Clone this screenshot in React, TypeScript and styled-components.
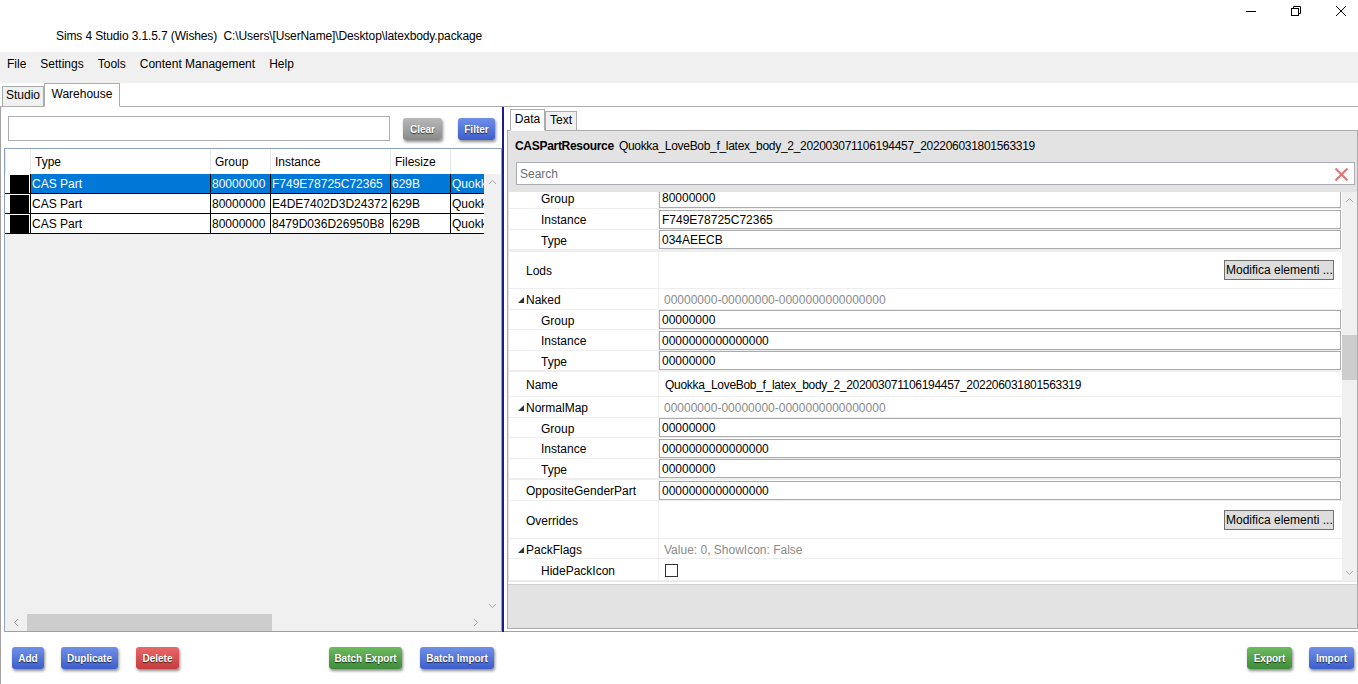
import React from "react";
import styled, { createGlobalStyle } from "styled-components";

const GlobalStyle = createGlobalStyle`
  html, body { margin: 0; padding: 0; background: #ffffff; }
  body { font-family: "Liberation Sans", Arial, sans-serif; font-size: 12px; color: #000; }
  * { box-sizing: border-box; }
`;

type Tone = "blue" | "gray" | "green" | "red";

const tones: Record<Tone, string> = {
  blue: "linear-gradient(#6f90e8, #3d5ecb)",
  gray: "linear-gradient(#b8b8b8, #8a8a8a)",
  green: "linear-gradient(#6dbb5f, #3f8b3a)",
  red: "linear-gradient(#ea6868, #c43c3c)",
};

const Window = styled.div`
  width: 1358px;
  height: 684px;
  overflow: hidden;
  display: flex;
  flex-direction: column;
  background: #fff;
`;

const TitleBar = styled.div`
  height: 52px;
  flex-shrink: 0;
  display: flex;
  justify-content: space-between;
`;

const TitleText = styled.div`
  padding: 29px 0 0 56px;
  white-space: pre;
  line-height: 14px;
  letter-spacing: -0.12px;
`;

const WinControls = styled.div`
  display: flex;
  gap: 35px;
  padding: 6px 12px 0 0;
  align-items: flex-start;
`;

const MenuBar = styled.div`
  height: 31px;
  flex-shrink: 0;
  background: #f0f0f0;
  display: flex;
  align-items: flex-start;
`;

const MenuItem = styled.div`
  padding: 0 7px;
  height: 24px;
  line-height: 24px;
`;

const TabStrip = styled.div<{ $pad: number }>`
  height: 24px;
  flex-shrink: 0;
  display: flex;
  align-items: flex-end;
  padding-left: ${(p) => p.$pad}px;
  border-bottom: 1px solid #acacac;
`;

const Tab = styled.div<{ $active?: boolean; $w: number; $h: number }>`
  width: ${(p) => p.$w}px;
  height: ${(p) => p.$h}px;
  border: 1px solid #acacac;
  border-bottom: ${(p) => (p.$active ? "1px solid #fff" : "none")};
  margin-bottom: ${(p) => (p.$active ? "-1px" : "0")};
  background: ${(p) => (p.$active ? "#fff" : "#f0f0f0")};
  text-align: center;
  line-height: ${(p) => p.$h - 3}px;
  position: relative;
  z-index: ${(p) => (p.$active ? 1 : 0)};
`;

const Body = styled.div`
  flex: 1;
  display: flex;
  flex-direction: column;
  border-left: 1px solid #a0a0a0;
`;

const Split = styled.div`
  height: 525px;
  display: flex;
  flex-shrink: 0;
`;

const LeftPanel = styled.div`
  width: 503px;
  border-right: 2px solid #1c1c8a;
  display: flex;
  flex-direction: column;
`;

const FilterRow = styled.div`
  height: 41px;
  display: flex;
  align-items: flex-start;
  padding: 9px 0 0 7px;
`;

const TextBox = styled.div`
  width: 382px;
  height: 25px;
  border: 1px solid #abadb3;
  background: #fff;
`;

const Btn = styled.button<{ $tone: Tone; $w: number; $ml?: number; $mt?: number }>`
  width: ${(p) => p.$w}px;
  height: 22px;
  flex-shrink: 0;
  margin-left: ${(p) => p.$ml ?? 0}px;
  margin-top: ${(p) => p.$mt ?? 0}px;
  padding: 0;
  border: none;
  border-radius: 3px;
  background: ${(p) => tones[p.$tone]};
  box-shadow: 1px 2px 3px rgba(0, 0, 0, 0.45);
  color: #fff;
  font: bold 10px "Liberation Sans", Arial, sans-serif;
  text-shadow: 0 1px 1px rgba(0, 0, 0, 0.65);
  white-space: nowrap;
`;

const TableBox = styled.div`
  margin-left: 3px;
  width: 498px;
  height: 484px;
  border: 1px solid #8ea3c2;
  background: #f0f0f0;
  display: grid;
  grid-template-columns: 1fr 17px;
  grid-template-rows: 1fr 17px;
`;

const GridArea = styled.div`
  overflow: hidden;
  display: flex;
  flex-direction: column;
`;

const cols = "25px 180px 60px 120px 60px 34px";

const HeaderRow = styled.div`
  display: grid;
  grid-template-columns: ${cols};
  height: 25px;
  padding-top: 1px;
  background: #fff;
`;

const HeaderCell = styled.div`
  border-left: 1px solid #e5e5e5;
  padding-left: 4px;
  line-height: 24px;
  white-space: nowrap;
  overflow: hidden;
`;

const DataRow = styled.div<{ $selected?: boolean }>`
  display: grid;
  grid-template-columns: ${cols};
  height: 20px;
  background: ${(p) => (p.$selected ? "#0078d7" : "#fff")};
  color: ${(p) => (p.$selected ? "#fff" : "#000")};
  border-bottom: 1px solid #000;
`;

const RowHead = styled.div`
  background: #fff;
  padding: 1px 1px 0 5px;
`;

const RowSwatch = styled.div`
  height: 100%;
  background: #000;
`;

const DataCell = styled.div`
  border-left: 1px solid #000;
  padding: 1px 0 0 1px;
  line-height: 18px;
  white-space: nowrap;
  overflow: hidden;
`;

const VScroll = styled.div`
  display: flex;
  flex-direction: column;
`;

const ScrollCorner = styled.div<{ $h: number }>`
  height: ${(p) => p.$h}px;
  background: #fff;
`;

const ArrowBox = styled.div<{ $w?: number; $h?: number }>`
  width: ${(p) => (p.$w ? `${p.$w}px` : "100%")};
  height: ${(p) => (p.$h ? `${p.$h}px` : "100%")};
  flex-shrink: 0;
  display: flex;
  align-items: center;
  justify-content: center;
`;

const Filler = styled.div`
  flex: 1;
`;

const HScroll = styled.div`
  display: flex;
  align-items: stretch;
`;

const HThumb = styled.div`
  width: 245px;
  background: #cdcdcd;
`;

const RightPanel = styled.div`
  flex: 1;
  display: flex;
  flex-direction: column;
  padding-left: 3px;
  border-bottom: 1px solid #a0a0a0;
`;

const RightContent = styled.div`
  flex: 1;
  margin-bottom: 2px;
  border: 1px solid #acacac;
  border-top: none;
  background: #e3e3e3;
  display: flex;
  flex-direction: column;
`;

const ResHeader = styled.div`
  height: 31px;
  padding: 8px 0 0 7px;
  line-height: 14px;
  white-space: nowrap;
  letter-spacing: -0.3px;
  b {
    font-weight: bold;
    margin-right: 5px;
  }
`;

const SearchBox = styled.div`
  height: 23px;
  margin: 0 2px 0 8px;
  background: #fff;
  border: 1px solid #abadb3;
  display: flex;
  align-items: center;
  justify-content: space-between;
  padding: 1px 5px 0 3px;
  color: #6d6d6d;
`;

const PropGrid = styled.div`
  margin: 7px 0 0 1px;
  height: 389px;
  display: flex;
  background: #fff;
`;

const PropRows = styled.div`
  width: 833px;
  overflow: hidden;
`;

const PropRow = styled.div<{ $h: number; $sep: number }>`
  height: ${(p) => p.$h}px;
  display: flex;
  border-bottom: ${(p) => p.$sep}px solid #eeeeee;
`;

const LabelCell = styled.div<{ $level: number; $cut?: boolean }>`
  width: 150px;
  flex-shrink: 0;
  border-right: 1px solid #f0f0f0;
  display: flex;
  align-items: center;
  padding-top: ${(p) => (p.$cut ? 0 : 2)}px;
  padding-bottom: ${(p) => (p.$cut ? 3 : 0)}px;
  padding-left: ${(p) => (p.$level ? 32 : 17)}px;
  position: relative;
  white-space: nowrap;
`;

const Expander = styled.svg`
  position: absolute;
  left: 9px;
  top: 50%;
  margin-top: -2px;
`;

const ValueCell = styled.div<{ $end?: boolean }>`
  flex: 1;
  display: flex;
  align-items: ${(p) => (p.$end ? "flex-end" : "center")};
  overflow: hidden;
`;

const ValueBox = styled.div<{ $cut?: boolean }>`
  width: 682px;
  height: ${(p) => (p.$cut ? 17 : 19)}px;
  border: 1px solid #ababab;
  border-top: ${(p) => (p.$cut ? "none" : "1px solid #ababab")};
  padding: ${(p) => (p.$cut ? 0 : 1)}px 0 0 2px;
  line-height: ${(p) => (p.$cut ? 14 : 16)}px;
  white-space: nowrap;
`;

const ValueText = styled.div<{ $muted?: boolean }>`
  padding: 2px 0 0 ${(p) => (p.$muted ? 5 : 6)}px;
  color: ${(p) => (p.$muted ? "#8a8a8a" : "#000")};
  white-space: nowrap;
  letter-spacing: ${(p) => (p.$muted ? "0" : "-0.3px")};
`;

const EditButton = styled.div`
  margin-left: auto;
  margin-right: 8px;
  width: 110px;
  height: 20px;
  background: #dddddd;
  border: 1px solid #707070;
  line-height: 18px;
  padding-left: 1px;
  white-space: nowrap;
`;

const CheckBox = styled.div`
  margin: 2px 0 0 6px;
  width: 13px;
  height: 13px;
  border: 1px solid #333;
  background: #fff;
`;

const GridScroll = styled.div`
  flex: 1;
  background: #f0f0f0;
  display: flex;
  flex-direction: column;
`;

const VThumbTrack = styled.div`
  flex: 1;
  padding-top: 126px;
`;

const VThumb = styled.div`
  height: 45px;
  background: #cdcdcd;
`;

const GridFoot = styled.div`
  height: 4px;
  background: #fff;
  border-top: 1px solid #e8e8e8;
  border-bottom: 1px solid #d0d0d0;
`;

const BottomBar = styled.div`
  flex: 1;
  display: flex;
  align-items: flex-start;
  padding: 15px 4px 0 11px;
`;

const Spacer = styled.div`
  flex: 1;
`;

const Chevron = ({ dir }: { dir: "up" | "down" | "left" | "right" }) => {
  const rot = { up: 0, right: 90, down: 180, left: 270 }[dir];
  return (
    <svg width="9" height="9" viewBox="0 0 9 9" style={{ transform: `rotate(${rot}deg)` }}>
      <polyline points="1,6 4.5,2.5 8,6" fill="none" stroke="#a6a6a6" strokeWidth="1" />
    </svg>
  );
};

type Prop = {
  label: string;
  level: number;
  h: number;
  sep?: number;
  expander?: boolean;
  kind: "box" | "text" | "muted" | "button" | "check";
  value?: string;
  cut?: boolean;
};

const props: Prop[] = [
  { label: "Group", level: 1, h: 17, kind: "box", value: "80000000", cut: true },
  { label: "Instance", level: 1, h: 21, kind: "box", value: "F749E78725C72365" },
  { label: "Type", level: 1, h: 22, sep: 3, kind: "box", value: "034AEECB" },
  { label: "Lods", level: 0, h: 37, kind: "button" },
  { label: "Naked", level: 0, h: 21, expander: true, kind: "muted", value: "00000000-00000000-0000000000000000" },
  { label: "Group", level: 1, h: 20, kind: "box", value: "00000000" },
  { label: "Instance", level: 1, h: 21, kind: "box", value: "0000000000000000" },
  { label: "Type", level: 1, h: 21, sep: 2, kind: "box", value: "00000000" },
  { label: "Name", level: 0, h: 25, kind: "text", value: "Quokka_LoveBob_f_latex_body_2_202003071106194457_202206031801563319" },
  { label: "NormalMap", level: 0, h: 21, expander: true, kind: "muted", value: "00000000-00000000-0000000000000000" },
  { label: "Group", level: 1, h: 20, kind: "box", value: "00000000" },
  { label: "Instance", level: 1, h: 21, kind: "box", value: "0000000000000000" },
  { label: "Type", level: 1, h: 21, sep: 2, kind: "box", value: "00000000" },
  { label: "OppositeGenderPart", level: 0, h: 21, kind: "box", value: "0000000000000000" },
  { label: "Overrides", level: 0, h: 38, kind: "button" },
  { label: "PackFlags", level: 0, h: 20, expander: true, kind: "muted", value: "Value: 0, ShowIcon: False" },
  { label: "HidePackIcon", level: 1, h: 22, kind: "check" },
];

const rows = [
  { group: "80000000", instance: "F749E78725C72365", selected: true },
  { group: "80000000", instance: "E4DE7402D3D24372" },
  { group: "80000000", instance: "8479D036D26950B8" },
];

const App = () => {
  return (
    <Window>
      <GlobalStyle />
      <TitleBar>
        <TitleText>{"Sims 4 Studio 3.1.5.7 (Wishes)  C:\\Users\\[UserName]\\Desktop\\latexbody.package"}</TitleText>
        <WinControls>
          <svg width="10" height="10" viewBox="0 0 10 10">
            <line x1="0" y1="5.5" x2="10" y2="5.5" stroke="#000" strokeWidth="1" />
          </svg>
          <svg width="10" height="10" viewBox="0 0 10 10">
            <rect x="0.5" y="2.5" width="7" height="7" fill="none" stroke="#000" />
            <polyline points="2.5,2.5 2.5,0.5 9.5,0.5 9.5,7.5 7.5,7.5" fill="none" stroke="#000" />
          </svg>
          <svg width="10" height="10" viewBox="0 0 10 10">
            <line x1="0" y1="0" x2="10" y2="10" stroke="#000" strokeWidth="1" />
            <line x1="10" y1="0" x2="0" y2="10" stroke="#000" strokeWidth="1" />
          </svg>
        </WinControls>
      </TitleBar>

      <MenuBar>
        <MenuItem>File</MenuItem>
        <MenuItem>Settings</MenuItem>
        <MenuItem>Tools</MenuItem>
        <MenuItem>Content Management</MenuItem>
        <MenuItem>Help</MenuItem>
      </MenuBar>

      <TabStrip $pad={2}>
        <Tab $w={42} $h={20}>Studio</Tab>
        <Tab $w={76} $h={24} $active>
          Warehouse
        </Tab>
      </TabStrip>

      <Body>
        <Split>
          <LeftPanel>
            <FilterRow>
              <TextBox />
              <Btn $tone="gray" $w={39} $ml={13} $mt={2}>
                Clear
              </Btn>
              <Btn $tone="blue" $w={37} $ml={16} $mt={2}>
                Filter
              </Btn>
            </FilterRow>
            <TableBox>
              <GridArea>
                <HeaderRow>
                  <HeaderCell />
                  <HeaderCell>Type</HeaderCell>
                  <HeaderCell>Group</HeaderCell>
                  <HeaderCell>Instance</HeaderCell>
                  <HeaderCell>Filesize</HeaderCell>
                  <HeaderCell />
                </HeaderRow>
                {rows.map((r, i) => (
                  <DataRow key={i} $selected={r.selected}>
                    <RowHead>
                      <RowSwatch />
                    </RowHead>
                    <DataCell>CAS Part</DataCell>
                    <DataCell>{r.group}</DataCell>
                    <DataCell>{r.instance}</DataCell>
                    <DataCell>629B</DataCell>
                    <DataCell>Quokka</DataCell>
                  </DataRow>
                ))}
              </GridArea>
              <VScroll>
                <ScrollCorner $h={25} />
                <ArrowBox $h={17}>
                  <Chevron dir="up" />
                </ArrowBox>
                <Filler />
                <ArrowBox $h={17}>
                  <Chevron dir="down" />
                </ArrowBox>
              </VScroll>
              <HScroll>
                <ArrowBox $w={22}>
                  <Chevron dir="left" />
                </ArrowBox>
                <HThumb />
                <Filler />
                <ArrowBox $w={17}>
                  <Chevron dir="right" />
                </ArrowBox>
              </HScroll>
              <div />
            </TableBox>
          </LeftPanel>

          <RightPanel>
            <TabStrip $pad={3}>
              <Tab $w={35} $h={22} $active>
                Data
              </Tab>
              <Tab $w={32} $h={19}>
                Text
              </Tab>
            </TabStrip>
            <RightContent>
              <ResHeader>
                <b>CASPartResource</b>
                Quokka_LoveBob_f_latex_body_2_202003071106194457_202206031801563319
              </ResHeader>
              <SearchBox>
                <span>Search</span>
                <svg width="15" height="15" viewBox="0 0 15 15">
                  <line x1="1.5" y1="1.5" x2="13.5" y2="13.5" stroke="#e27272" strokeWidth="2" />
                  <line x1="13.5" y1="1.5" x2="1.5" y2="13.5" stroke="#e27272" strokeWidth="2" />
                </svg>
              </SearchBox>
              <PropGrid>
                <PropRows>
                  {props.map((p, i) => (
                    <PropRow key={i} $h={p.h} $sep={p.sep ?? 1}>
                      <LabelCell $level={p.level} $cut={p.cut}>
                        {p.expander && (
                          <Expander width="6" height="6" viewBox="0 0 6 6">
                            <polygon points="6,0 6,6 0,6" fill="#333" />
                          </Expander>
                        )}
                        {p.label}
                      </LabelCell>
                      <ValueCell $end={p.cut}>
                        {p.kind === "box" && <ValueBox $cut={p.cut}>{p.value}</ValueBox>}
                        {p.kind === "text" && <ValueText>{p.value}</ValueText>}
                        {p.kind === "muted" && <ValueText $muted>{p.value}</ValueText>}
                        {p.kind === "button" && <EditButton>Modifica elementi ...</EditButton>}
                        {p.kind === "check" && <CheckBox />}
                      </ValueCell>
                    </PropRow>
                  ))}
                </PropRows>
                <GridScroll>
                  <ArrowBox $h={17}>
                    <Chevron dir="up" />
                  </ArrowBox>
                  <VThumbTrack>
                    <VThumb />
                  </VThumbTrack>
                  <ArrowBox $h={17}>
                    <Chevron dir="down" />
                  </ArrowBox>
                </GridScroll>
              </PropGrid>
              <GridFoot />
            </RightContent>
          </RightPanel>
        </Split>

        <BottomBar>
          <Btn $tone="blue" $w={32}>
            Add
          </Btn>
          <Btn $tone="blue" $w={57} $ml={17}>
            Duplicate
          </Btn>
          <Btn $tone="red" $w={43} $ml={18}>
            Delete
          </Btn>
          <Btn $tone="green" $w={73} $ml={150}>
            Batch Export
          </Btn>
          <Btn $tone="blue" $w={74} $ml={18}>
            Batch Import
          </Btn>
          <Spacer />
          <Btn $tone="green" $w={45}>
            Export
          </Btn>
          <Btn $tone="blue" $w={45} $ml={17}>
            Import
          </Btn>
        </BottomBar>
      </Body>
    </Window>
  );
};

export default App;
